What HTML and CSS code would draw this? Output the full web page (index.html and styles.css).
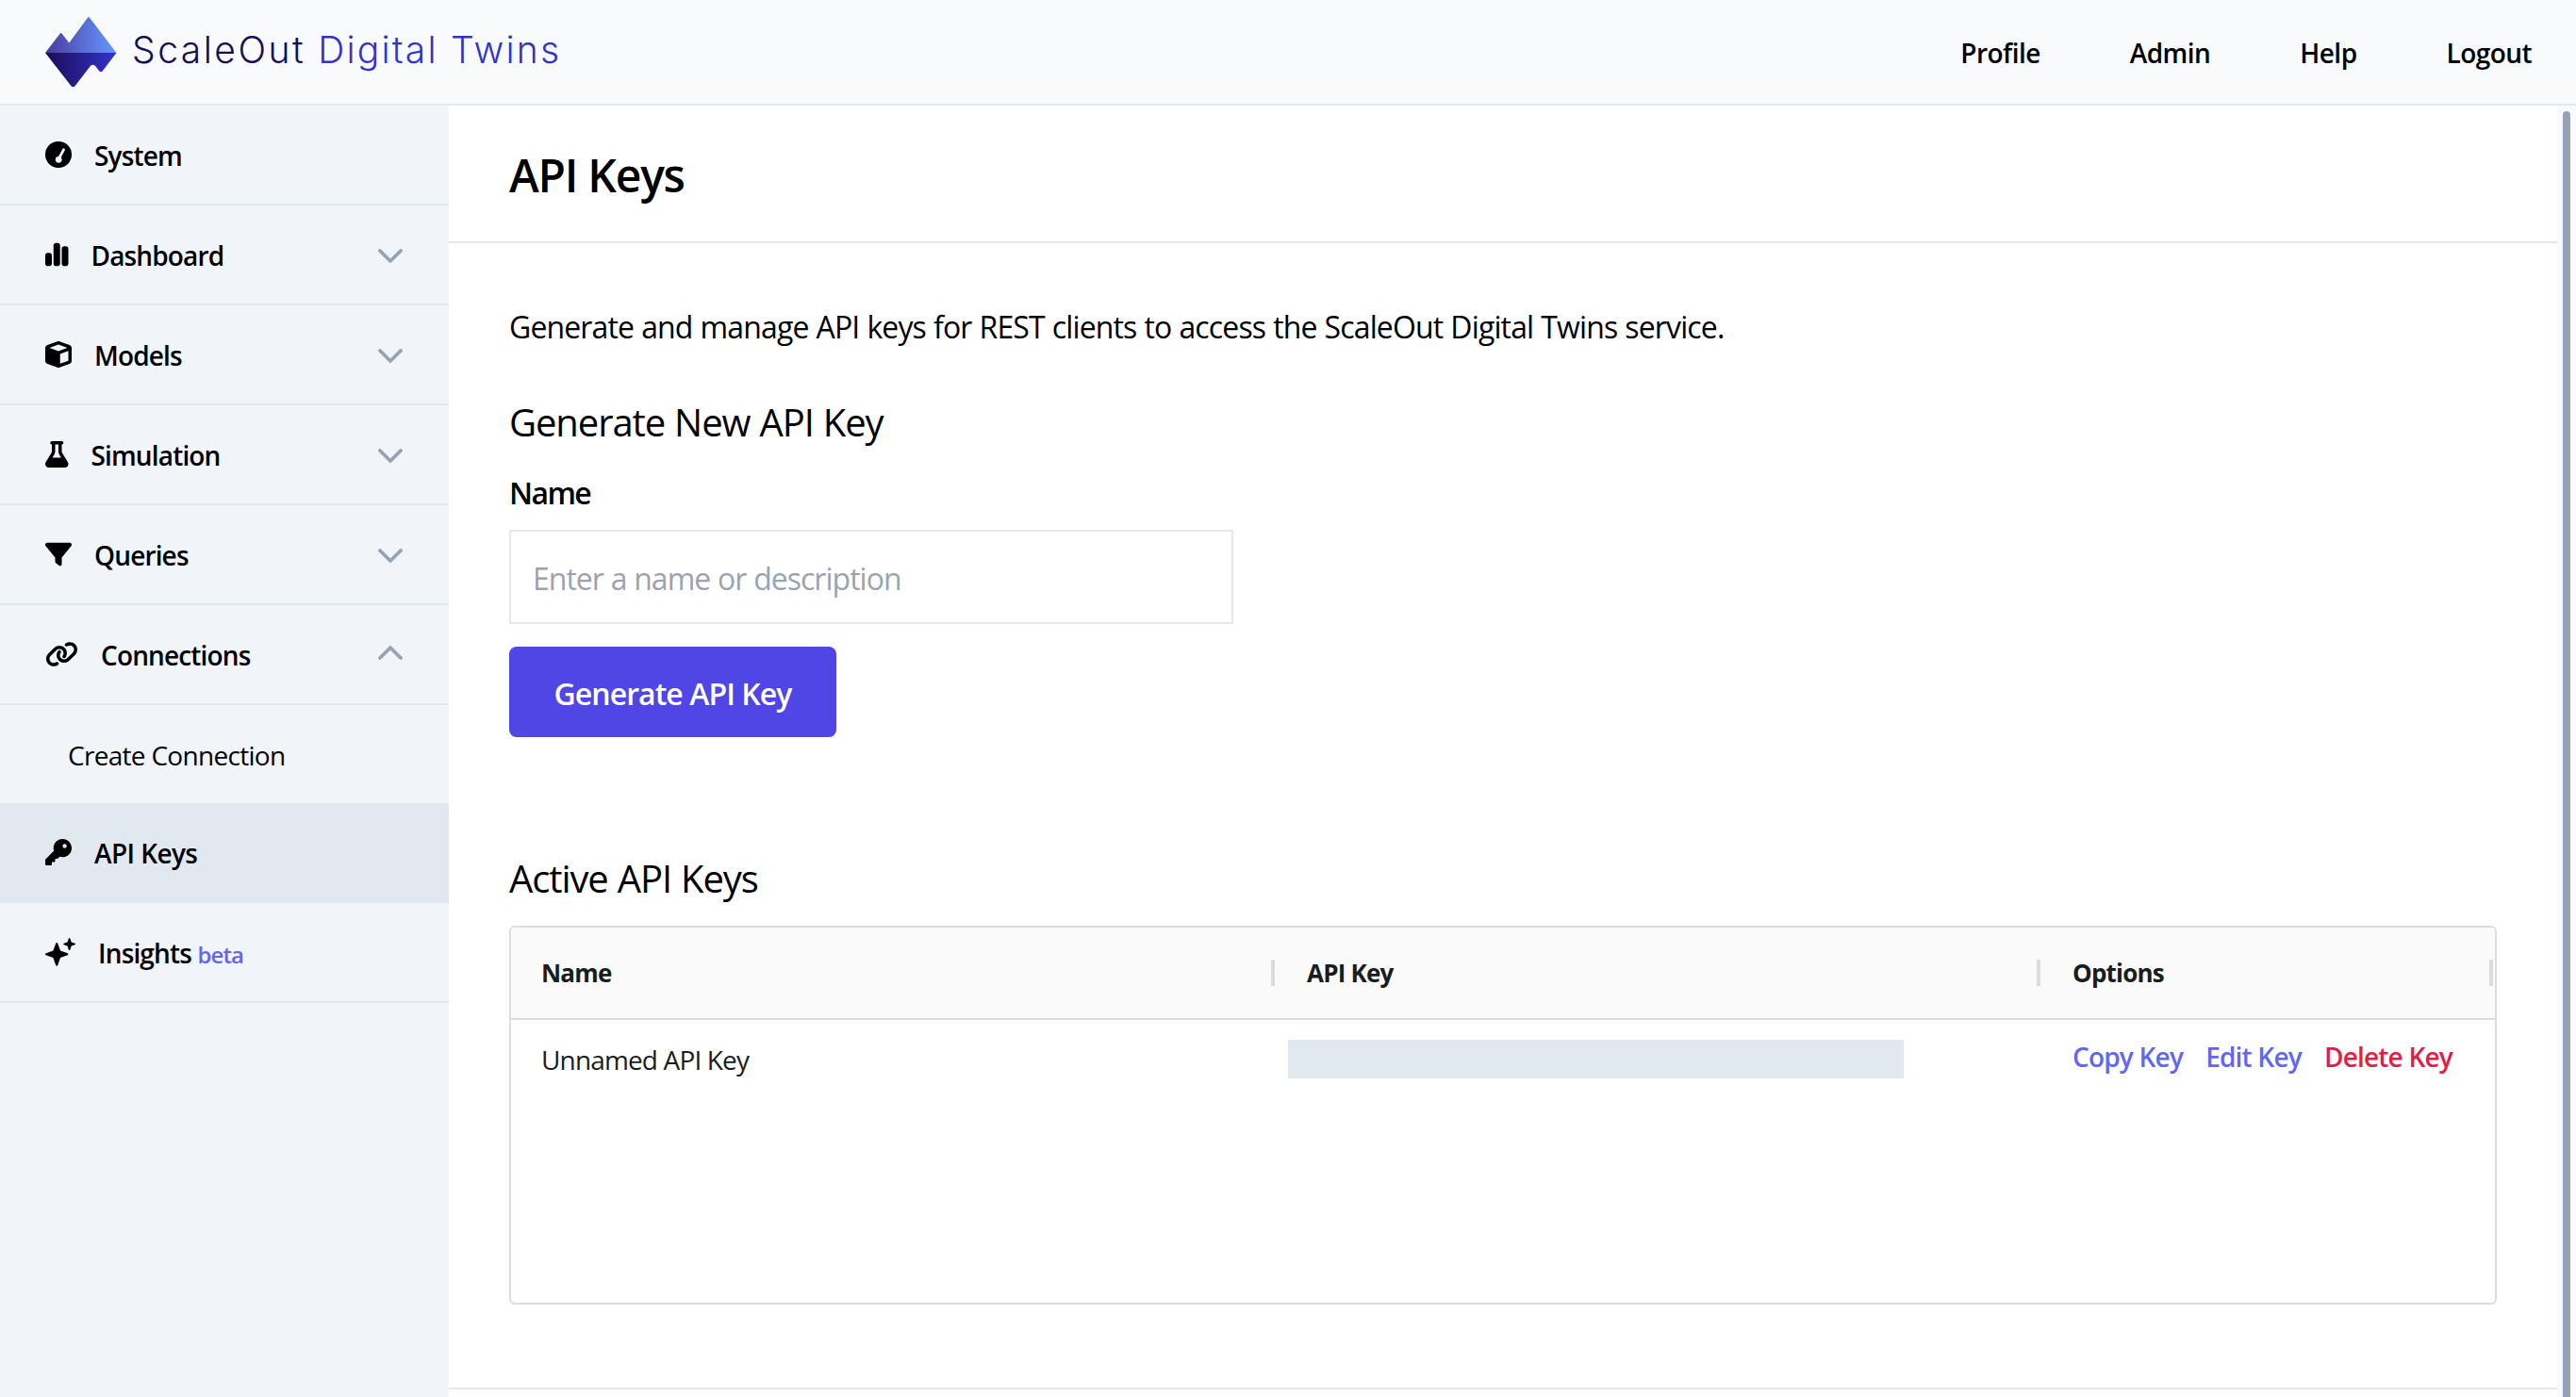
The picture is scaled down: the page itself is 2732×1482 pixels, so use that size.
FILE: index.html
```
<!DOCTYPE html>
<html lang="en">
<head>
    <meta charset="utf-8">
    <title>API Keys - ScaleOut Digital Twins</title>
    <link rel="stylesheet" href="styles.css">
</head>
<body>
    <header class="topbar">
        <a class="brand" href="#">
            <svg class="brand-logo" viewBox="0 0 76 76" aria-hidden="true">
                <defs>
                    <linearGradient id="logoTop" x1="0" y1="0" x2="1" y2="0">
                        <stop offset="0" stop-color="#4a3a9f"/>
                        <stop offset="1" stop-color="#6699ff"/>
                    </linearGradient>
                    <linearGradient id="logoBottom" x1="0" y1="0" x2="1" y2="0">
                        <stop offset="0" stop-color="#1b0d54"/>
                        <stop offset="1" stop-color="#3333cc"/>
                    </linearGradient>
                </defs>
                <path fill="url(#logoTop)" d="M0 38 15.8 17.6Q16.7 16.2 17.6 17.6L25.3 27.6 44.8 1Q46 -.8 47.2 1L75.5 38Z"/>
                <path fill="url(#logoBottom)" d="M0 38H75.5L61 57Q59 59.5 57 57L52.7 51.5Q50.5 50 48.3 51.5L31.5 73.2Q29.5 75.4 27.5 73.2Z"/>
            </svg>
            <span class="brand-name">ScaleOut</span>
            <span class="brand-product">Digital Twins</span>
        </a>
        <nav class="topnav">
            <a href="#">Profile</a>
            <a href="#">Admin</a>
            <a href="#">Help</a>
            <a href="#">Logout</a>
        </nav>
    </header>

    <div class="layout">
        <aside class="sidebar">
            <a class="side-item" href="#">
                <svg class="icon" width="28" height="28" viewBox="0 0 28 28"><circle cx="14" cy="14" r="14"/><path d="M14.3 18.5 19.5 8.8" fill="none" stroke="#f1f5f9" stroke-width="2.8" stroke-linecap="round"/><circle cx="14.2" cy="19.3" r="3.4" fill="#f1f5f9"/></svg>
                <span>System</span>
            </a>
            <a class="side-item" href="#">
                <svg class="icon" width="24.5" height="28" viewBox="0 0 448 512"><path d="M160 80c0-26.5 21.5-48 48-48h32c26.5 0 48 21.5 48 48V432c0 26.5-21.5 48-48 48H208c-26.5 0-48-21.5-48-48V80zM0 272c0-26.5 21.5-48 48-48H80c26.5 0 48 21.5 48 48V432c0 26.5-21.5 48-48 48H48c-26.5 0-48-21.5-48-48V272zM368 96h32c26.5 0 48 21.5 48 48V432c0 26.5-21.5 48-48 48H368c-26.5 0-48-21.5-48-48V144c0-26.5 21.5-48 48-48z"/></svg>
                <span>Dashboard</span>
                <svg class="chevron" viewBox="0 0 26 16"><path d="M2 2 13 13 24 2"/></svg>
            </a>
            <a class="side-item" href="#">
                <svg class="icon" width="28" height="28" viewBox="0 0 512 512"><path d="M234.5 5.7c13.9-5 29.1-5 43.1 0l192 68.6C495 83.4 512 107.5 512 134.6V377.4c0 27-17 51.2-42.5 60.3l-192 68.6c-13.9 5-29.1 5-43.1 0l-192-68.6C17 428.6 0 404.5 0 377.4V134.6c0-27 17-51.2 42.5-60.3l192-68.6zM256 66L82.3 128 256 190l173.7-62L256 66zm32 368.6l160-57.1v-188L288 246.6v188z"/></svg>
                <span>Models</span>
                <svg class="chevron" viewBox="0 0 26 16"><path d="M2 2 13 13 24 2"/></svg>
            </a>
            <a class="side-item" href="#">
                <svg class="icon" width="24.5" height="28" viewBox="0 0 448 512"><path d="M288 0H160 128C110.3 0 96 14.3 96 32s14.3 32 32 32V196.8c0 11.8-3.3 23.5-9.5 33.5L10.3 406.2C3.6 417.2 0 429.7 0 442.6C0 480.9 31.1 512 69.4 512H378.6c38.3 0 69.4-31.1 69.4-69.4c0-12.8-3.6-25.4-10.3-36.4L329.5 230.4c-6.2-10.1-9.5-21.7-9.5-33.5V64c17.7 0 32-14.3 32-32s-14.3-32-32-32H288zM192 196.8V64h64V196.8c0 23.7 6.6 46.9 19 67.1L309.5 320h-171L173 263.9c12.4-20.2 19-43.4 19-67.1z"/></svg>
                <span>Simulation</span>
                <svg class="chevron" viewBox="0 0 26 16"><path d="M2 2 13 13 24 2"/></svg>
            </a>
            <a class="side-item" href="#">
                <svg class="icon" width="28" height="28" viewBox="0 0 512 512"><path d="M3.9 54.9C10.5 40.9 24.5 32 40 32H472c15.5 0 29.5 8.9 36.1 22.9s4.6 30.5-5.2 42.5L320 320.9V448c0 12.1-6.8 23.2-17.7 28.6s-23.8 4.3-33.5-3l-64-48c-8.1-6-12.8-15.5-12.8-25.6V320.9L9 97.3C-.7 85.4-2.8 68.8 3.9 54.9z"/></svg>
                <span>Queries</span>
                <svg class="chevron" viewBox="0 0 26 16"><path d="M2 2 13 13 24 2"/></svg>
            </a>
            <a class="side-item" href="#">
                <svg class="icon" width="35" height="28" viewBox="0 0 640 512"><path d="M579.8 267.7c56.5-56.5 56.5-148 0-204.5c-50-50-128.8-56.5-186.3-15.4l-1.6 1.1c-14.4 10.3-17.7 30.3-7.4 44.6s30.3 17.7 44.6 7.4l1.6-1.1c32.1-22.9 76-19.3 103.8 8.6c31.5 31.5 31.5 82.5 0 114L422.3 334.8c-31.5 31.5-82.5 31.5-114 0c-27.9-27.9-31.5-71.8-8.6-103.8l1.1-1.6c10.3-14.4 6.9-34.4-7.4-44.6s-34.4-6.9-44.6 7.4l-1.1 1.6C206.5 251.2 213 330 263 380c56.5 56.5 148 56.5 204.5 0L579.8 267.7zM60.2 244.3c-56.5 56.5-56.5 148 0 204.5c50 50 128.8 56.5 186.3 15.4l1.6-1.1c14.4-10.3 17.7-30.3 7.4-44.6s-30.3-17.7-44.6-7.4l-1.6 1.1c-32.1 22.9-76 19.3-103.8-8.6C74 372 74 321 105.5 289.5L217.7 177.2c31.5-31.5 82.5-31.5 114 0c27.9 27.9 31.5 71.8 8.6 103.9l-1.1 1.6c-10.3 14.4-6.9 34.4 7.4 44.6s34.4 6.9 44.6-7.4l1.1-1.6C433.5 260.8 427 182 377 132c-56.5-56.5-148-56.5-204.5 0L60.2 244.3z"/></svg>
                <span>Connections</span>
                <svg class="chevron chevron-up" viewBox="0 0 26 16"><path d="M2 13 13 2 24 13"/></svg>
            </a>
            <a class="side-item side-sub" href="#">
                <span>Create Connection</span>
            </a>
            <a class="side-item active" href="#">
                <svg class="icon" width="28" height="28" viewBox="0 0 512 512"><path d="M336 352c97.2 0 176-78.8 176-176S433.2 0 336 0S160 78.8 160 176c0 18.7 2.9 36.8 8.3 53.7L7 391c-4.5 4.5-7 10.6-7 17v80c0 13.3 10.7 24 24 24h80c13.3 0 24-10.7 24-24V448h40c13.3 0 24-10.7 24-24V384h40c6.4 0 12.5-2.5 17-7l33.3-33.3c16.9 5.4 35 8.3 53.7 8.3zM376 96a40 40 0 1 1 0 80 40 40 0 1 1 0-80z"/></svg>
                <span>API Keys</span>
            </a>
            <a class="side-item" href="#">
                <svg class="icon" width="32" height="30" viewBox="0 0 32 30"><path d="M12.2 5Q12.9 5 13.2 5.8L16 13.5 23.7 16.3Q24.4 16.6 24.4 17.3T23.7 18.3L16 21.1 13.2 28.9Q12.9 29.7 12.2 29.7T11.2 28.9L8.4 21.1.7 18.3Q0 18 0 17.3T.7 16.3L8.4 13.5 11.2 5.8Q11.5 5 12.2 5ZM25.6 0Q26.1 0 26.4.7L27.7 4.5 31.4 5.8Q32 6.1 32 6.6T31.4 7.3L27.7 8.6 26.4 12.4Q26.1 13 25.6 13T24.8 12.4L23.5 8.6 19.8 7.3Q19.2 7 19.2 6.6T19.8 5.8L23.5 4.5 24.8.7Q25.1 0 25.6 0Z"/></svg>
                <span>Insights <small class="beta">beta</small></span>
            </a>
        </aside>

        <main class="content">
            <div class="page-head">
                <h1>API Keys</h1>
            </div>
            <div class="page-body">
                <p class="intro">Generate and manage API keys for REST clients to access the ScaleOut Digital Twins service.</p>

                <h2>Generate New API Key</h2>
                <form class="key-form">
                    <label for="key_name">Name</label>
                    <input type="text" id="key_name" placeholder="Enter a name or description">
                    <button type="button">Generate API Key</button>
                </form>

                <h2>Active API Keys</h2>
                <div class="grid">
                    <div class="grid-row grid-head">
                        <div class="cell">Name</div>
                        <div class="cell">API Key</div>
                        <div class="cell">Options</div>
                    </div>
                    <div class="grid-row">
                        <div class="cell cell-name">Unnamed API Key</div>
                        <div class="cell cell-key"><span class="key-mask"></span></div>
                        <div class="cell cell-options">
                            <a href="#">Copy Key</a>
                            <a href="#">Edit Key</a>
                            <a class="danger" href="#">Delete Key</a>
                        </div>
                    </div>
                </div>
            </div>
            <footer class="page-foot"></footer>
        </main>

        <div class="scroll-track">
            <div class="scroll-thumb"></div>
        </div>
    </div>
</body>
</html>
```

FILE: styles.css
```
* {
    box-sizing: border-box;
}

body {
    margin: 0;
    height: 100vh;
    display: flex;
    flex-direction: column;
    overflow: hidden;
    font-family: "Open Sans", "Noto Sans", sans-serif;
    font-size: 28px;
    color: #000;
    background-color: #fff;
}

a {
    color: inherit;
    text-decoration: none;
}

h1, h2, p {
    margin: 0;
}

/* Top bar */

.topbar {
    flex: none;
    display: flex;
    justify-content: space-between;
    align-items: center;
    height: 112px;
    padding: 1px 47px 0 48px;
    background-color: #f8fafc;
    border-bottom: 2px solid #e2e8f0;
}

.brand {
    display: flex;
    align-items: center;
    font-family: Inter, sans-serif;
    font-size: 39px;
    font-weight: 300;
    line-height: 50px;
}

.brand-logo {
    width: 76px;
    height: 76px;
    margin-right: 16px;
}

.brand-name {
    color: #1b0d54;
    letter-spacing: 2.5px;
    margin: 0 13px 6px 0;
}

.brand-product {
    color: #3333cc;
    letter-spacing: 2.2px;
    margin-bottom: 6px;
}

.topnav {
    display: flex;
    gap: 95px;
    font-weight: 600;
    letter-spacing: -0.55px;
}

/* Sidebar */

.layout {
    flex: 1;
    display: flex;
    min-height: 0;
}

.sidebar {
    flex: none;
    width: 476px;
    background-color: #f1f5f9;
}

.side-item {
    display: flex;
    align-items: center;
    gap: 24px;
    height: 106px;
    padding: 0 49px 0 48px;
    border-bottom: 2px solid #e2e8f0;
    font-weight: 600;
    letter-spacing: -0.85px;
}

.side-item span {
    padding-top: 1px;
}

.side-item.active {
    background-color: #e2e8f0;
    letter-spacing: -0.6px;
}

.side-sub {
    height: 104px;
    padding-left: 72px;
    border-bottom: 0;
    font-weight: 400;
    letter-spacing: -0.7px;
}

.icon {
    flex: none;
    fill: #000;
}

.chevron {
    width: 26px;
    height: 16px;
    margin-left: auto;
    margin-top: 4px;
    fill: none;
    stroke: #94a3b8;
    stroke-width: 3.8;
    stroke-linecap: round;
    stroke-linejoin: round;
}

.chevron-up {
    margin-top: -3px;
}

.beta {
    font-size: 24px;
    color: #6366f1;
}

/* Page */

.content {
    flex: 1;
    display: flex;
    flex-direction: column;
}

.page-head {
    display: flex;
    align-items: center;
    height: 146px;
    padding: 3px 64px 0;
    border-bottom: 2px solid #e5e7eb;
}

h1 {
    font-size: 48px;
    font-weight: 600;
    letter-spacing: -1.25px;
}

.page-body {
    padding: 65px 64px 88px;
}

.intro {
    margin-bottom: 49px;
    font-size: 32px;
    line-height: 48px;
    letter-spacing: -0.87px;
    word-spacing: 0.6px;
}

h2 {
    margin-bottom: 22px;
    font-size: 40px;
    font-weight: 400;
    line-height: 56px;
    letter-spacing: -1.1px;
    word-spacing: 0.8px;
}

.key-form {
    display: flex;
    flex-direction: column;
    align-items: flex-start;
    margin-bottom: 122px;
}

.key-form label {
    padding-top: 1px;
    margin-bottom: 15px;
    font-size: 32px;
    font-weight: 600;
    line-height: 48px;
    letter-spacing: -1.6px;
}

.key-form input {
    width: 768px;
    height: 100px;
    margin-bottom: 24px;
    padding: 2px 23px 0;
    border: 2px solid #e5e7eb;
    font: inherit;
    font-size: 32px;
    letter-spacing: -0.98px;
    word-spacing: 0.4px;
}

.key-form input::placeholder {
    color: #9ca3af;
}

.key-form button {
    width: 347px;
    height: 96px;
    padding: 2px 0 0;
    border: 0;
    border-radius: 8px;
    font: inherit;
    font-size: 32px;
    font-weight: 600;
    letter-spacing: -0.95px;
    color: #fff;
    background-color: #4f46e5;
}

/* Keys table */

.grid {
    height: 402px;
    border: 2px solid #dddddd;
    border-radius: 6px;
    overflow: hidden;
    color: #181d1f;
}

.grid-row {
    display: grid;
    grid-template-columns: 812px 812px 1fr;
    height: 84px;
}

.cell {
    display: flex;
    align-items: center;
    padding-left: 32px;
    letter-spacing: -0.85px;
}

.grid-head {
    height: 98px;
    background-color: #fafafa;
    border-bottom: 2px solid #dadbdb;
}

.grid-head .cell {
    font-size: 26px;
    line-height: 34px;
    font-weight: 700;
    letter-spacing: -0.8px;
}

/* column resize handle */
.grid-head .cell::after {
    content: "";
    width: 4px;
    height: 28px;
    margin: 0 2px 0 auto;
    background-color: #dadbdc;
}

.cell-name {
    padding-bottom: 1px;
}

.cell-key {
    padding: 0 0 1px 12px;
}

.key-mask {
    width: 653px;
    height: 41px;
    background-color: #e1e8f0;
}

.cell-options {
    gap: 24px;
    padding-bottom: 7px;
    font-weight: 600;
    letter-spacing: -0.8px;
    color: #6366f1;
}

.danger {
    color: #e11d48;
}

.page-foot {
    border-top: 2px solid #e5e7eb;
}

/* Scrollbar */

.scroll-track {
    flex: none;
    width: 20px;
    padding: 6px 6px 0;
    background-color: #f8fafc;
}

.scroll-thumb {
    width: 8px;
    height: 100%;
    border-radius: 4px 4px 0 0;
    background-color: #94a3b8;
}
```
